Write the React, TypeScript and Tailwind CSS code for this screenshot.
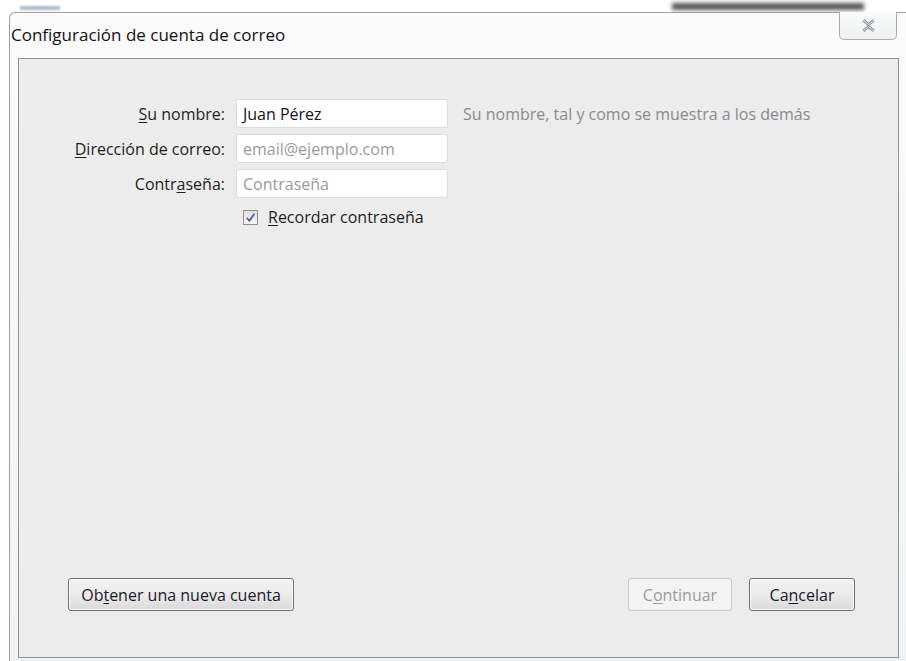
import React from "react";

const ui = { fontFamily: '"Open Sans", "Noto Sans", sans-serif' };

function U({ children }: { children: React.ReactNode }) {
  return <span className="underline underline-offset-2 decoration-1">{children}</span>;
}

function Field({ label, value, placeholder }: { label: React.ReactNode; value?: string; placeholder?: string }) {
  return (
    <div className="flex items-center h-[29px]">
      <div className="w-[217px] text-right pr-[11px] text-[16px] text-[#1e1e1e]">{label}</div>
      <div className="w-[212px] h-[29px] bg-white border border-[#dcdcdc] rounded-[2px] flex items-center px-[6px] text-[16px]">
        {value ? (
          <span className="text-[#1a1020]">{value}</span>
        ) : (
          <span className="text-[#9a9a9a]">{placeholder}</span>
        )}
      </div>
    </div>
  );
}

function Btn({ children, w, disabled }: { children: React.ReactNode; w: string; disabled?: boolean }) {
  return (
    <div
      className={
        "h-[33px] rounded-[3px] flex items-center justify-center text-[16px] " +
        w +
        (disabled
          ? " border border-[#c9c9c9] bg-[#f3f3f3] text-[#9a9a9a]"
          : " border border-[#707070] bg-gradient-to-b from-[#f2f2f2] via-[#ebebeb] to-[#d9d9d9] text-[#1a1a2a] shadow-[inset_0_0_0_1px_#fcfcfc]")
      }
    >
      {children}
    </div>
  );
}

export default function App() {
  return (
    <div className="w-[906px] h-[661px] bg-white relative overflow-hidden" style={ui}>
      {/* blurred desktop content behind the window */}
      <div className="absolute left-[672px] top-[3px] w-[192px] h-[7px] bg-[#2a2a2a] blur-[2px] opacity-80" />
      <div className="absolute left-[20px] top-[6px] w-[40px] h-[4px] bg-[#7a8aa0] blur-[1px] opacity-60" />

      {/* window frame */}
      <div className="absolute left-[9px] top-[12px] w-[910px] h-[660px] rounded-tl-[6px] border-l border-t border-[#9aa0a6] bg-gradient-to-b from-[#fbfbfb] to-[#f1f2f3]">
        {/* title bar */}
        <div className="h-[45px] relative">
          <div className="pl-[1px] pt-[9px] text-[17px] text-[#111]">Configuración de cuenta de correo</div>
          <div className="absolute left-[829px] top-[-1px] w-[58px] h-[28px] border border-t-0 border-[#a8adb3] rounded-b-[5px] bg-gradient-to-b from-[#fafafa] to-[#eef0f2] flex items-center justify-center">
            <svg width="15" height="13" viewBox="0 0 14 12">
              <path d="M2 1 L7 5 L12 1 M2 11 L7 7 L12 11" fill="none" stroke="#8a8e96" strokeWidth="2.6" strokeLinejoin="round" />
              <path d="M2 1 L7 5 L12 1 M2 11 L7 7 L12 11" fill="none" stroke="#f4f4f4" strokeWidth="0.9" strokeLinejoin="round" />
            </svg>
          </div>
        </div>

        {/* client area */}
        <div className="ml-[8px] w-[881px] h-[600px] border border-[#8f9090] bg-[#ececec] flex flex-col">
          <div className="pt-[40px] flex flex-col gap-[6px]">
            <div className="flex items-center">
              <Field label={<><U>S</U>u nombre:</>} value="Juan Pérez" />
              <div className="ml-[15px] text-[16px] text-[#8a8a8a]">Su nombre, tal y como se muestra a los demás</div>
            </div>
            <Field label={<><U>D</U>irección de correo:</>} placeholder="email@ejemplo.com" />
            <Field label={<>Contr<U>a</U>seña:</>} placeholder="Contraseña" />
            <div className="flex items-center pl-[224px] h-[26px]">
              <div className="w-[15px] h-[15px] border border-[#8f8f8f] bg-gradient-to-b from-[#e0e0e0] to-[#f6f6f6] flex items-center justify-center">
                <svg width="11" height="11" viewBox="0 0 10 10">
                  <path d="M1.5 5.2 L4 8 L8.5 1.5" fill="none" stroke="#4a5fa8" strokeWidth="1.6" />
                </svg>
              </div>
              <span className="ml-[10px] text-[16px] text-[#1e1e1e]"><U>R</U>ecordar contraseña</span>
            </div>
          </div>

          <div className="flex-1" />

          <div className="flex items-center pl-[49px] pr-[43px] pb-[46px]">
            <Btn w="w-[226px]">Ob<U>t</U>ener una nueva cuenta</Btn>
            <div className="flex-1" />
            <Btn w="w-[104px]" disabled>C<U>o</U>ntinuar</Btn>
            <div className="w-[17px]" />
            <Btn w="w-[106px]">Ca<U>n</U>celar</Btn>
          </div>
        </div>
      </div>
    </div>
  );
}
